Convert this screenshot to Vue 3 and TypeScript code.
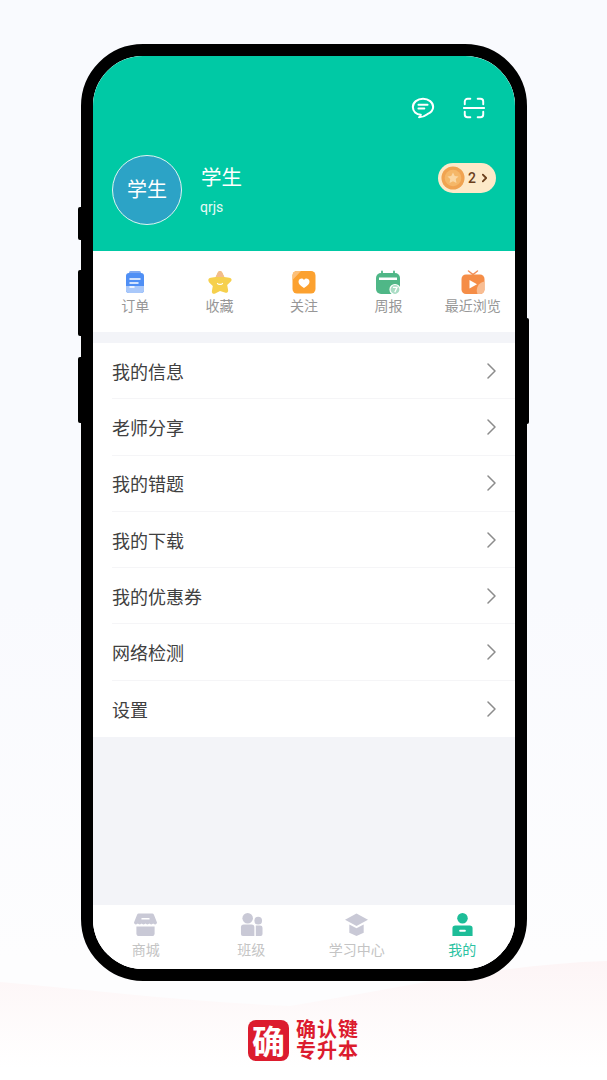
<template>
  <div class="page">
    <svg class="wave" viewBox="0 0 607 130" preserveAspectRatio="none" aria-hidden="true">
      <defs>
        <linearGradient id="waveFade" x1="0" y1="0" x2="0" y2="1">
          <stop offset="0" stop-color="#fdf5f6" />
          <stop offset="0.9" stop-color="#ffffff" />
        </linearGradient>
      </defs>
      <path d="M0 32 C90 40 190 52 290 56 C390 40 500 14 607 11 V130 H0 Z" fill="url(#waveFade)" />
    </svg>

    <div class="device">
      <span class="side-btn btn-a"></span>
      <span class="side-btn btn-b"></span>
      <span class="side-btn btn-c"></span>
      <span class="side-btn btn-d"></span>

      <div class="screen">
        <header class="hero">
          <div class="hero-actions">
            <svg class="action-icon" viewBox="0 0 26 26" fill="none" stroke="#fff" stroke-width="2.2" stroke-linecap="round" stroke-linejoin="round">
              <path d="M13 3C7 3 2 6.900 2 12c0 4.600 3.700 8 8.600 8.400-.2 1-.9 1.900-1.900 2.600 3.300-.1 6.500-1.300 9-3.300 3.600-1.700 6.300-4.500 6.300-7.700C24 6.900 19 3 13 3Z" />
              <path d="M8 9.500h10M8 13.500h6.500" stroke-width="2" />
            </svg>
            <svg class="action-icon" viewBox="0 0 26 26" fill="none" stroke="#fff" stroke-width="2.1" stroke-linecap="round" stroke-linejoin="round">
              <path d="M3 9V6a3 3 0 0 1 3-3h3M17 3h3a3 3 0 0 1 3 3v3M3 17v3a3 3 0 0 0 3 3h3M17 23h3a3 3 0 0 0 3-3v-3M2 13h22" />
            </svg>
          </div>
          <div class="profile">
            <div class="avatar">学生</div>
            <div class="identity">
              <div class="name">学生</div>
              <div class="account">qrjs</div>
            </div>
            <div class="coins">
              <svg class="coin" viewBox="0 0 26 26">
                <circle cx="13" cy="13" r="12.500" fill="#f0a351" />
                <circle cx="13" cy="13" r="9" fill="#f5b768" />
                <path d="M13 7l1.900 3.700 4.100.6-3 2.900.7 4.100-3.700-1.900-3.700 1.900.7-4.100-3-2.900 4.100-.6Z" fill="#fbd7a2" />
              </svg>
              <span class="coin-count">2</span>
              <svg class="coin-arrow" viewBox="0 0 8 12" fill="none" stroke="#6b3f1c" stroke-width="2.200" stroke-linecap="round" stroke-linejoin="round">
                <path d="M2 2l4 4-4 4" />
              </svg>
            </div>
          </div>
        </header>

        <nav class="shortcuts">
          <div v-for="item in shortcuts" :key="item.key" class="shortcut">
            <svg class="shortcut-icon" viewBox="0 0 24 24">
              <template v-if="item.key === 'order'">
                <rect x="6" y="0" width="12" height="3" rx="1.500" fill="#7fa9f2" />
                <rect x="3" y="2" width="18" height="20" rx="3" fill="#4f8ff5" />
                <path d="M3 15h18v4a3 3 0 0 1-3 3H6a3 3 0 0 1-3-3Z" fill="#a9c8fa" />
                <path d="M7 8h10M7 12h8M7 16h4" stroke="#fff" stroke-width="1.500" stroke-linecap="round" />
              </template>
              <template v-else-if="item.key === 'fav'">
                <path d="M12 0c1 0 1.800.6 2.300 1.700l2 4.300 5 .7c2.300.3 3.100 2.200 1.500 3.800l-3.600 3.500.9 5c.4 2.200-1.400 3.500-3.300 2.500L12 20l-4.800 2.500c-1.900 1-3.700-.3-3.300-2.500l.9-5-3.600-3.500C-.4 8.900.4 7 2.700 6.700l5-.7 2-4.300C10.200.6 11 0 12 0Z" fill="#f6d04d" />
                <path d="M12 0c1 0 1.800.6 2.300 1.700l2 4.300H7.700l2-4.300C10.200.6 11 0 12 0Z" fill="#f3bd8c" />
                <path d="M9.500 12.500c.6 1.200 4.400 1.200 5 0" fill="none" stroke="#fff" stroke-width="1.200" stroke-linecap="round" />
              </template>
              <template v-else-if="item.key === 'follow'">
                <rect x="0.500" y="0" width="23" height="22.500" rx="4.500" fill="#fca12f" />
                <path d="M0.500 9V4.500A4.500 4.500 0 0 1 5 0h4Z" fill="#fcc07a" />
                <path d="M12 17c-3.800-2.500-5.500-4.300-5.500-6.300a3 3 0 0 1 5.500-1.800 3 3 0 0 1 5.500 1.800c0 2-1.700 3.800-5.500 6.300Z" fill="#fff" />
              </template>
              <template v-else-if="item.key === 'weekly'">
                <rect x="0" y="2" width="24" height="21" rx="5" fill="#4fb787" />
                <path d="M6 0.500v3.500M18 0.500v3.500" stroke="#4fb787" stroke-width="1.800" stroke-linecap="round" />
                <rect x="3" y="6.500" width="18" height="2.500" fill="#fff" />
                <circle cx="19" cy="18.500" r="5" fill="#a9dcc4" stroke="#fff" stroke-width="1.200" />
                <path d="M17 16.300h4l-2.200 5" fill="none" stroke="#fff" stroke-width="1.300" />
              </template>
              <template v-else>
                <path d="M7.500 0l4.500 3.500L16.500 0" fill="none" stroke="#f2905a" stroke-width="1.500" stroke-linecap="round" />
                <rect x="0.500" y="3.500" width="23" height="19.500" rx="4.500" fill="#f58d47" />
                <path d="M23.500 10.500V18.500A4.500 4.500 0 0 1 19 23h-2.500a9 9 0 0 1 7-12.500Z" fill="#f8bd93" />
                <path d="M8.500 9l7.500 4.200-7.500 4.200Z" fill="#fff" />
              </template>
            </svg>
            <span class="shortcut-label">{{ item.label }}</span>
          </div>
        </nav>

        <ul class="menu">
          <li v-for="row in menuRows" :key="row" class="menu-row">
            <div class="menu-inner">
              <span>{{ row }}</span>
              <svg class="chevron" viewBox="0 0 10 16" fill="none" stroke="#8c8c8c" stroke-width="1.500" stroke-linecap="round" stroke-linejoin="round">
                <path d="M2 1l7 7-7 7" />
              </svg>
            </div>
          </li>
        </ul>

        <div class="filler"></div>

        <footer class="tabbar">
          <div v-for="tab in tabs" :key="tab.key" class="tab" :class="{ active: tab.key === 'mine' }">
            <svg class="tab-icon" viewBox="0 0 24 24">
              <template v-if="tab.key === 'shop'">
                <path d="M5 0.500h14a2 2 0 0 1 1.800 1.200L24 10c0 1.100-.9 2-2 2-.9 0-1.600-.6-2-1-.4.400-1.100 1-2 1s-1.500-.6-2-1c-.4.400-1 1-2 1s-1.500-.6-2-1c-.5.400-1 1-2 1s-1.600-.6-2-1c-.4.400-1 1-2 1s-1.600-.6-2-1c-.4.400-1.100 1-2 1-1.100 0-2-.9-2-2L3.200 1.700A2 2 0 0 1 5 0.500Z" fill="#c9c9d6" />
                <path d="M8.500 6h7" stroke="#fff" stroke-width="1.800" stroke-linecap="round" />
                <path d="M2.500 14h19v7a3 3 0 0 1-3 3h-13a3 3 0 0 1-3-3Z" fill="#c9c9d6" />
              </template>
              <template v-else-if="tab.key === 'class'">
                <circle cx="8" cy="5.500" r="5.500" fill="#c9c9d6" />
                <circle cx="19" cy="8" r="4" fill="#c9c9d6" />
                <path d="M1 15a3 3 0 0 1 3-3h8a3 3 0 0 1 3 3v9H3a2 2 0 0 1-2-2Z" fill="#c9c9d6" />
                <path d="M16.500 13H21a2.500 2.500 0 0 1 2.500 2.500V22a2 2 0 0 1-2 2h-5Z" fill="#c9c9d6" />
              </template>
              <template v-else-if="tab.key === 'study'">
                <path d="M12 0.500L24 7 12 13.500 0 7Z" fill="#c9c9d6" />
                <path d="M4.500 12L12 16l7.500-4v8.500L12 24l-7.500-3.500Z" fill="#c9c9d6" />
              </template>
              <template v-else>
                <circle cx="12" cy="5.500" r="5.500" fill="#1dbd98" />
                <path d="M4.500 13h15a3 3 0 0 1 3 3V24h-21v-8a3 3 0 0 1 3-3Z" fill="#1dbd98" />
                <path d="M9.500 18.500h5" stroke="#fff" stroke-width="2" stroke-linecap="round" />
              </template>
            </svg>
            <span class="tab-label">{{ tab.label }}</span>
          </div>
        </footer>
      </div>
    </div>

    <div class="brand">
      <div class="brand-mark">确</div>
      <div class="brand-text">
        <span>确认键</span>
        <span>专升本</span>
      </div>
    </div>
  </div>
</template>

<script setup lang="ts">
const shortcuts = [
  { key: 'order', label: '订单' },
  { key: 'fav', label: '收藏' },
  { key: 'follow', label: '关注' },
  { key: 'weekly', label: '周报' },
  { key: 'recent', label: '最近浏览' }
]

const menuRows = ['我的信息', '老师分享', '我的错题', '我的下载', '我的优惠券', '网络检测', '设置']

const tabs = [
  { key: 'shop', label: '商城' },
  { key: 'class', label: '班级' },
  { key: 'study', label: '学习中心' },
  { key: 'mine', label: '我的' }
]
</script>

<style>
html,
body {
  background: #f9fafe;
}
</style>

<style scoped>
.page {
  position: relative;
  width: 607px;
  height: 1080px;
  overflow: hidden;
  display: flex;
  flex-direction: column;
  align-items: center;
  background: linear-gradient(#f9fafe 0, #f9fafe 600px, #fdfdfe 960px);
  font-family: "Noto Sans CJK SC", "Noto Sans", sans-serif;
}

.wave {
  position: absolute;
  left: 0;
  bottom: 0;
  width: 607px;
  height: 130px;
}

/* Phone frame */
.device {
  position: relative;
  width: 446px;
  height: 937px;
  box-sizing: border-box;
  margin-top: 44px;
  margin-left: 1px;
  border: 12px solid #000;
  border-radius: 62px;
  background: #fff;
}

.side-btn {
  position: absolute;
  width: 3px;
  background: #000;
  border-radius: 2px 0 0 2px;
}

.btn-a {
  left: -15px;
  top: 151px;
  height: 33px;
}

.btn-b {
  left: -15px;
  top: 214px;
  height: 66px;
}

.btn-c {
  left: -15px;
  top: 301px;
  height: 66px;
}

.btn-d {
  right: -14px;
  top: 262px;
  height: 106px;
  width: 2px;
  border-radius: 0 2px 2px 0;
}

.screen {
  width: 100%;
  height: 100%;
  display: flex;
  flex-direction: column;
  overflow: hidden;
  border-radius: 50px;
  background: #f3f4f8;
}

/* Header */
.hero {
  height: 195px;
  flex: none;
  box-sizing: border-box;
  padding: 40px 19px 0;
  background: #00c9a5;
  color: #fff;
}

.hero-actions {
  display: flex;
  justify-content: flex-end;
  gap: 27px;
  padding-right: 10px;
}

.action-icon {
  width: 24px;
  height: 24px;
  display: block;
}

.profile {
  display: flex;
  align-items: flex-start;
  margin-top: 35px;
}

.avatar {
  width: 70px;
  height: 70px;
  flex: none;
  box-sizing: border-box;
  display: flex;
  align-items: center;
  justify-content: center;
  padding-bottom: 3px;
  border: 1px solid #dff5f2;
  border-radius: 50%;
  background: #2ca3c6;
  font-size: 20px;
}

.identity {
  margin-left: 19px;
  padding-top: 5px;
  flex: 1;
}

.name {
  font-size: 20.5px;
  line-height: 32px;
}

.account {
  margin-top: 6px;
  margin-left: -1px;
  font-family: Roboto, sans-serif;
  font-size: 14px;
  line-height: 18px;
  color: #e6f9f5;
}

.coins {
  width: 58px;
  height: 30px;
  flex: none;
  box-sizing: border-box;
  margin-top: 8px;
  padding-left: 3px;
  display: flex;
  align-items: center;
  border-radius: 15px;
  background: #fde9c8;
}

.coin {
  width: 24px;
  height: 24px;
  flex: none;
}

.coin-count {
  margin-left: 3px;
  font-family: Roboto, sans-serif;
  font-size: 14px;
  font-weight: 500;
  color: #6b3f1c;
}

.coin-arrow {
  width: 7px;
  height: 10px;
  margin-left: 5px;
}

/* Shortcut row */
.shortcuts {
  height: 81px;
  flex: none;
  display: grid;
  grid-template-columns: repeat(5, 1fr);
  box-sizing: border-box;
  padding-top: 20px;
  background: #fff;
}

.shortcut {
  display: flex;
  flex-direction: column;
  align-items: center;
}

.shortcut-icon {
  width: 24px;
  height: 24px;
  display: block;
  overflow: visible;
}

.shortcut-label {
  font-size: 14px;
  line-height: 20px;
  color: #979797;
}

/* Menu list */
.menu {
  margin: 11px 0 0;
  padding: 0;
  flex: none;
  list-style: none;
  background: #fff;
}

.menu-row {
  height: 56.3px;
  box-sizing: border-box;
  padding-left: 19px;
  font-size: 18px;
  color: #404040;
}

.menu-inner {
  height: 100%;
  box-sizing: border-box;
  display: flex;
  align-items: center;
  justify-content: space-between;
  padding-right: 19px;
  border-bottom: 1px solid #f5f5f7;
}

.menu-row:last-child .menu-inner {
  border-bottom: 0;
}

.chevron {
  width: 10px;
  height: 16px;
}

.filler {
  flex: 1;
}

/* Bottom tabs */
.tabbar {
  height: 64px;
  flex: none;
  display: grid;
  grid-template-columns: repeat(4, 1fr);
  box-sizing: border-box;
  padding-top: 8px;
  background: #fff;
}

.tab {
  display: flex;
  flex-direction: column;
  align-items: center;
}

.tab-icon {
  width: 23px;
  height: 23px;
  display: block;
}

.tab-label {
  margin-top: 3px;
  font-size: 14px;
  line-height: 20px;
  color: #c4c4c4;
}

.tab.active .tab-label {
  color: #2ac2a1;
}

/* Brand footer */
.brand {
  position: relative;
  display: flex;
  align-items: center;
  gap: 7px;
  margin-top: 39px;
}

.brand-mark {
  width: 41px;
  height: 41px;
  display: flex;
  align-items: center;
  justify-content: center;
  border-radius: 8px;
  background: #dc1c2e;
  color: #fff;
  font-size: 33px;
  font-weight: 700;
  line-height: 1;
}

.brand-text {
  display: flex;
  flex-direction: column;
  gap: 1px;
  color: #dc1c2e;
  font-family: "Liberation Sans", "Noto Sans CJK SC", sans-serif;
  font-size: 20px;
  font-weight: 700;
  letter-spacing: 1px;
  line-height: 20px;
}

.brand-text span {
  display: block;
}
</style>
